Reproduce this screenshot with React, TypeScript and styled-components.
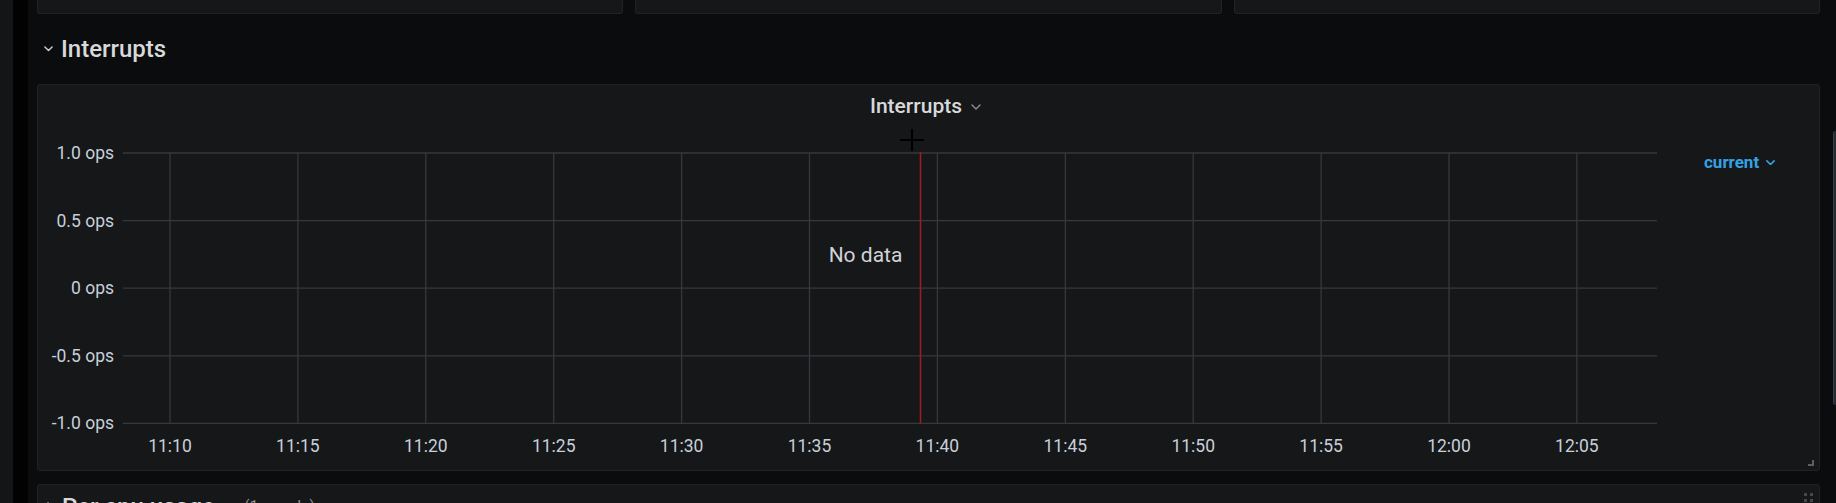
import React from "react";
import styled, { createGlobalStyle } from "styled-components";

const Global = createGlobalStyle`
  html, body { margin: 0; padding: 0; background: #0b0c0e; }
  body { font-family: Roboto, "Liberation Sans", sans-serif; overflow: hidden; }
  * { box-sizing: border-box; }
`;

const Shell = styled.div`
  display: flex;
  height: 503px;
  overflow: hidden;
  background: #0b0c0e;
`;

const SideEdge = styled.div<{ $w: number; $bg: string }>`
  flex: 0 0 ${(p) => p.$w}px;
  background: ${(p) => p.$bg};
`;

const Main = styled.main`
  flex: 1;
  min-width: 0;
  padding-left: 9px;
  display: flex;
  flex-direction: column;
`;

const TopPanels = styled.div`
  flex: 0 0 14px;
  display: grid;
  grid-template-columns: repeat(3, 1fr);
  gap: 12px;
`;

const StubPanel = styled.div`
  background: #161719;
  border: 1px solid #202226;
  border-top: none;
  border-radius: 0 0 3px 3px;
`;

const RowHeader = styled.div`
  flex: 0 0 70px;
  display: flex;
  align-items: center;
  gap: 8px;
  padding-left: 7px;
`;

const RowTitle = styled.span`
  font-size: 24px;
  line-height: 24px;
  font-weight: 500;
  color: #d8d9da;
`;

const Panel = styled.section`
  flex: 0 0 387px;
  position: relative;
  display: flex;
  flex-direction: column;
  background: #161719;
  border: 1px solid #202226;
  border-radius: 3px;
`;

const PanelHeader = styled.header`
  flex: 0 0 43px;
  display: flex;
  align-items: center;
  justify-content: center;
  gap: 9px;
  padding-right: 6px;
`;

const PanelTitle = styled.span`
  font-size: 21px;
  line-height: 21px;
  font-weight: 500;
  color: #d8d9da;
`;

const PanelBody = styled.div`
  flex: 1;
  display: flex;
  min-height: 0;
`;

const ChartBox = styled.div`
  flex: 0 0 1640px;
  position: relative;
`;

const ChartSvg = styled.svg`
  display: block;
  overflow: visible;
  font-family: Roboto, "Liberation Sans", sans-serif;
`;

const Legend = styled.div`
  flex: 1;
  padding: 25px 0 0 26px;
`;

const LegendToggle = styled.span`
  display: inline-flex;
  align-items: center;
  gap: 7px;
  font-size: 17px;
  line-height: 17px;
  font-weight: 700;
  color: #33a2e5;
`;

const ResizeHandle = styled.span`
  position: absolute;
  right: 5px;
  bottom: 4px;
  width: 6px;
  height: 6px;
  border-right: 2px solid #5c5e62;
  border-bottom: 2px solid #5c5e62;
`;

const CollapsedRow = styled.div`
  flex: 0 0 48px;
  margin-top: 13px;
  display: flex;
  align-items: flex-start;
  justify-content: space-between;
  padding: 10px 6px 0 9px;
  background: #161719;
  border: 1px solid #202226;
  border-radius: 3px;
`;

const CollapsedTitle = styled.div`
  display: flex;
  align-items: center;
  gap: 9px;
`;

const PanelCount = styled.span`
  font-size: 16px;
  line-height: 24px;
  color: #8e8e8e;
  margin-left: 20px;
`;

const Grip = styled.div`
  display: grid;
  grid-template-columns: repeat(2, 3px);
  gap: 3px;
  margin-top: -2px;
  span {
    width: 3px;
    height: 3px;
    background: #45474b;
  }
`;

const ScrollTrack = styled.div`
  flex: 0 0 16px;
  display: flex;
  justify-content: flex-end;
  padding-top: 131px;
`;

const ScrollThumb = styled.div`
  width: 3px;
  height: 274px;
  background: #262a31;
  border-left: 1px solid #3a3f48;
  border-radius: 3px 0 0 3px;
`;

const Chevron = ({ color, w = 10, sw = 1.6 }: { color: string; w?: number; sw?: number }) => (
  <svg width={w} height={w * 0.6} viewBox="0 0 10 6" fill="none">
    <path d="M1 1 L5 5 L9 1" stroke={color} strokeWidth={sw} strokeLinecap="round" strokeLinejoin="round" />
  </svg>
);

const ChevronRight = ({ color }: { color: string }) => (
  <svg width={6} height={10} viewBox="0 0 6 10" fill="none">
    <path d="M1 1 L5 5 L1 9" stroke={color} strokeWidth={1.6} strokeLinecap="round" strokeLinejoin="round" />
  </svg>
);

const yTicks = ["1.0 ops", "0.5 ops", "0 ops", "-0.5 ops", "-1.0 ops"];
const xTicks = ["11:10", "11:15", "11:20", "11:25", "11:30", "11:35", "11:40", "11:45", "11:50", "11:55", "12:00", "12:05"];

const PLOT_L = 85;
const PLOT_R = 1619;
const PLOT_T = 25;
const Y_STEP = 67.6;
const X0 = 132;
const X_STEP = 127.9;
const GRID = "#36383c";
const LABEL = "#c7d0d9";

function Chart() {
  const plotB = PLOT_T + Y_STEP * 4;
  return (
    <ChartSvg width={1640} height={342} viewBox="0 0 1640 342">
      {yTicks.map((t, i) => {
        const y = PLOT_T + Y_STEP * i;
        return (
          <g key={t}>
            <line x1={PLOT_L} x2={PLOT_R} y1={y} y2={y} stroke={GRID} strokeWidth={1.3} />
            <text x={76} y={y + 6} textAnchor="end" fontSize={17.5} fill={LABEL}>
              {t}
            </text>
          </g>
        );
      })}
      {xTicks.map((t, i) => {
        const x = X0 + X_STEP * i;
        return (
          <g key={t}>
            <line x1={x} x2={x} y1={PLOT_T} y2={plotB} stroke={GRID} strokeWidth={1.3} />
            <text x={x} y={324} textAnchor="middle" fontSize={17.5} fill={LABEL}>
              {t}
            </text>
          </g>
        );
      })}
      <line x1={882.5} x2={882.5} y1={PLOT_T - 1} y2={plotB} stroke="#9c1d1d" strokeWidth={1.6} />
      <text x={827.5} y={133.5} textAnchor="middle" fontSize={21} fill="#d0d3d8">
        No data
      </text>
      <g stroke="#000" strokeWidth={2}>
        <line x1={862} x2={886} y1={12} y2={12} />
        <line x1={874} x2={874} y1={1} y2={23} />
      </g>
    </ChartSvg>
  );
}

export default function App() {
  return (
    <>
      <Global />
      <Shell>
        <SideEdge $w={13} $bg="#141517" />
        <SideEdge $w={15} $bg="#020202" />
        <Main>
          <TopPanels>
            <StubPanel />
            <StubPanel />
            <StubPanel />
          </TopPanels>
          <RowHeader>
            <Chevron color="#c7d0d9" w={9} />
            <RowTitle>Interrupts</RowTitle>
          </RowHeader>
          <Panel>
            <PanelHeader>
              <PanelTitle>Interrupts</PanelTitle>
              <Chevron color="#8e8e8e" w={10} sw={1.4} />
            </PanelHeader>
            <PanelBody>
              <ChartBox>
                <Chart />
              </ChartBox>
              <Legend>
                <LegendToggle>
                  current
                  <Chevron color="#33a2e5" w={9} sw={1.8} />
                </LegendToggle>
              </Legend>
            </PanelBody>
            <ResizeHandle />
          </Panel>
          <CollapsedRow>
            <CollapsedTitle>
              <ChevronRight color="#c7d0d9" />
              <RowTitle>Per cpu usage</RowTitle>
              <PanelCount>(1 panels)</PanelCount>
            </CollapsedTitle>
            <Grip>
              <span />
              <span />
              <span />
              <span />
            </Grip>
          </CollapsedRow>
        </Main>
        <ScrollTrack>
          <ScrollThumb />
        </ScrollTrack>
      </Shell>
    </>
  );
}
